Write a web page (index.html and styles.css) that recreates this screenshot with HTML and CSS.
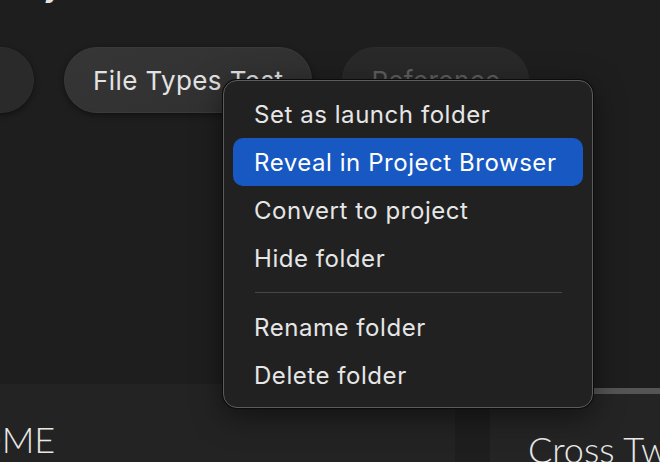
FILE: index.html
```html
<!DOCTYPE html>
<html>
<head>
  <title>Folders</title>
  <meta name="viewport" content="width=device-width, initial-scale=1">
  <link rel="stylesheet" href="styles.css">
</head>
<body>
<div class="page">
  <h1 class="title">My Folders</h1>

  <div class="tabs">
    <div class="pill pill-edge">Samples</div>
    <div class="pill">File Types Test</div>
    <div class="pill pill-dim">Reference</div>
  </div>

  <div class="cards">
    <div class="card card-left">
      <span class="card-name">HOME</span>
    </div>
    <div class="card card-right">
      <span class="card-name">Cross Twist</span>
    </div>
  </div>
</div>

<div class="menu">
  <div class="menu-item">Set as launch folder</div>
  <div class="menu-item active">Reveal in Project Browser</div>
  <div class="menu-item">Convert to project</div>
  <div class="menu-item">Hide folder</div>
  <div class="menu-sep"></div>
  <div class="menu-item">Rename folder</div>
  <div class="menu-item">Delete folder</div>
</div>
</body>
</html>
```

FILE: styles.css
```css
html, body { margin: 0; padding: 0; }
body {
  font-family: Inter, "Noto Sans", sans-serif;
  background: #1e1e1e;
  color: #e4e4e4;
  width: 660px;
  height: 462px;
  overflow: hidden;
  position: relative;
}

.page { width: 660px; height: 462px; overflow: hidden; }

.title {
  margin: -36px 0 0 12px;
  font-size: 34px;
  line-height: 40px;
  font-weight: 500;
  color: #e4e4e4;
}

/* project tabs */
.tabs {
  display: flex;
  gap: 30px;
  margin-top: 43px;
  height: 66px;
}
.pill {
  flex: none;
  height: 64px;
  padding: 0 28px;
  border: 1px solid #3a3a3a;
  border-radius: 33px;
  background: linear-gradient(160deg, #363636, #2f2f2f);
  box-shadow: 0 2px 6px rgba(0, 0, 0, 0.45);
  display: flex;
  align-items: center;
  font-size: 26px;
  letter-spacing: 0.4px;
  color: #e2e2e2;
}
.pill-edge {
  width: 182px;
  margin-left: -206px;
  background: #2a2a2a;
  border-color: #2e2e2e;
  color: transparent;
}
.pill-dim {
  background: #292929;
  border-color: #2c2c2c;
  color: #5f5f5f;
  box-shadow: none;
}

/* folder cards */
.cards {
  display: flex;
  align-items: flex-start;
  gap: 35px;
  margin-top: 271px;
}
.card {
  flex: none;
  height: 120px;
  box-sizing: border-box;
}
.card-name {
  font-family: Lato, "Open Sans", sans-serif;
  font-weight: 300;
  font-size: 36px;
  color: #e8e8e8;
  white-space: nowrap;
}
.card-left {
  width: 547px;
  margin-left: -92px;
  padding: 33px 0 0 38px;
  background: #232323;
}
.card-right {
  width: 300px;
  margin-top: 4px;
  padding: 33px 0 0 38px;
  background: #242424;
  border-top: 6px solid #555;
}

/* context menu */
.menu {
  position: absolute;
  left: 223px;
  top: 80px;
  width: 370px;
  height: 328px;
  box-sizing: border-box;
  padding: 9px 9px 0;
  border: 1px solid #5c5c5c;
  border-radius: 14px;
  background: #212121;
  box-shadow: 0 0 0 1px #0c0c0c, 0 8px 30px rgba(0, 0, 0, 0.5);
}
.menu-item {
  height: 48px;
  padding-left: 21px;
  border-radius: 10px;
  display: flex;
  align-items: center;
  font-size: 24px;
  letter-spacing: 0.55px;
  color: #e6e6e6;
}
.menu-item.active {
  background: #1858c2;
  color: #fff;
}
.menu-sep {
  height: 1px;
  margin: 10px 21px 10px 22px;
  background: #474747;
}
```
